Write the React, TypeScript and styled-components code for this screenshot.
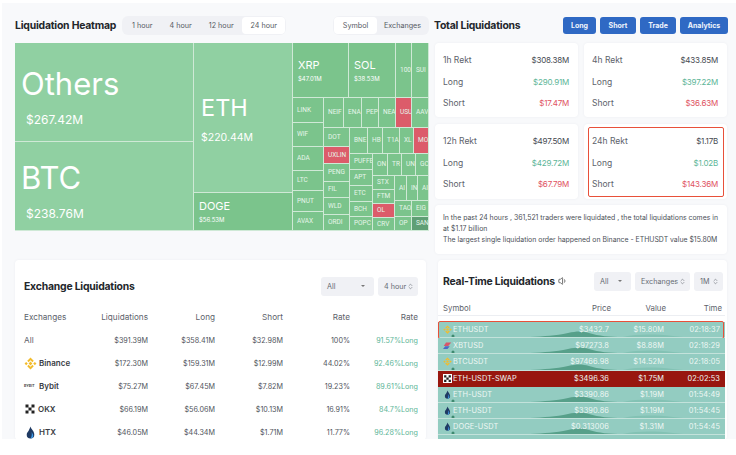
import React from 'react'
import styled, {createGlobalStyle} from 'styled-components'
import {ChevronsUpDown, Volume1} from 'lucide-react'

const GlobalStyle = createGlobalStyle`
  html, body {
    margin: 0;
    padding: 0;
    background: #fff;
    font-family: Inter, "Liberation Sans", sans-serif;
    color: #2a2d33;
  }
`

const Page = styled.div`
  width: 734px;
  height: 436px;
  margin: 3px 0 0 2px;
  padding: 0 7px 0 13px;
  box-sizing: border-box;
  overflow: hidden;
  background: #f8f9fb;
  display: grid;
  grid-template-columns: 414px 292px;
  column-gap: 6px;
`
const Column = styled.div`
  display: flex;
  flex-direction: column;
`
const HeaderRow = styled.div`
  height: 40px;
  display: flex;
  align-items: center;
  padding-top: 4px;
  box-sizing: border-box;
  justify-content: space-between;
`
const HeaderLeft = styled.div`
  display: flex;
  align-items: center;
  gap: 6px;
`
const Title = styled.h2`
  margin: 0;
  font-size: 10.4px;
  font-weight: 700;
  letter-spacing: -0.2px;
  color: #23262b;
  white-space: nowrap;
`
const SideTitle = styled(Title)`
  margin-left: -1px;
`
const Segmented = styled.div`
  display: flex;
  align-items: center;
  height: 19px;
  padding: 0 1px;
  background: #f0f1f5;
  border-radius: 6px;
`
const Segment = styled.span<{$active?: boolean; $w: number}>`
  width: ${p => p.$w}px;
  height: ${p => (p.$active ? 17 : 15)}px;
  display: flex;
  align-items: center;
  justify-content: center;
  font-size: 7.2px;
  color: #555a63;
  border-radius: 4px;
  background: ${p => (p.$active ? '#fff' : 'transparent')};
`
const Buttons = styled.div`
  display: flex;
  gap: 4px;
  margin-right: -1px;
`
const BlueButton = styled.button<{$w: number}>`
  width: ${p => p.$w}px;
  height: 17px;
  padding: 0;
  border: 0;
  border-radius: 3px;
  background: #2f69c4;
  color: #f1f5fc;
  font-family: inherit;
  font-size: 7px;
  font-weight: 700;
`

/* treemap: tile positions are the content */
const Treemap = styled.div`
  position: relative;
  height: 188px;
  background: #fff;
`
const Tile = styled.div<{$tone: string; $kind: string}>`
  position: absolute;
  box-sizing: border-box;
  border-right: 1px solid #cfe9d6;
  border-bottom: 1px solid #cfe9d6;
  overflow: hidden;
  white-space: nowrap;
  color: #fff;
  display: flex;
  flex-direction: column;
  justify-content: center;
  background: ${p => ({big: '#90d0a2', mid: '#7bc48c', red: '#dc5c6a', dark: '#5f9f75'}[p.$tone])};
  padding-left: ${p => ({xl: 6, lg: 7, md: 5, xs: 4}[p.$kind])}px;
  padding-top: ${p => (p.$kind === 'xl' ? 7 : p.$kind === 'lg' ? 1 : 0)}px;
`
const TileName = styled.span<{$kind: string}>`
  font-weight: 400;
  font-family: ${p => (p.$kind === 'xs' ? 'Roboto, sans-serif' : 'inherit')};
  color: ${p => (p.$kind === 'xs' ? '#e6f5ea' : '#fff')};
  font-size: ${p => ({xl: 31, lg: 23.5, md: 11, xs: 6.5}[p.$kind])}px;
  line-height: ${p => ({xl: 38, lg: 32, md: 15, xs: 9}[p.$kind])}px;
`
const TileValue = styled.span<{$kind: string}>`
  font-size: ${p => ({xl: 12, lg: 10.5, md: 6}[p.$kind])}px;
  line-height: ${p => (p.$kind === 'md' ? 8 : 15)}px;
  margin-top: ${p => ({xl: 9, lg: 6, md: 2}[p.$kind])}px;
  margin-left: ${p => (p.$kind === 'xl' ? 5 : 0)}px;
`

const StatGrid = styled.div`
  display: grid;
  grid-template-columns: 143px 143px;
  gap: 7px 6px;
`
const Card = styled.div`
  background: #fff;
  border-radius: 4px;
  box-shadow: 0 0 3px rgba(30, 40, 70, 0.05);
`
const StatCard = styled(Card)<{$h: number}>`
  position: relative;
  height: ${p => p.$h}px;
  padding: 7px 9px 0 8px;
  box-sizing: border-box;
`
const Highlight = styled.div`
  position: absolute;
  top: 3px;
  left: 4px;
  right: 3px;
  bottom: 2px;
  border: 1.5px solid #e8503a;
  border-radius: 2px;
`
const StatRow = styled.div`
  display: flex;
  justify-content: space-between;
  align-items: center;
  font-size: 8.5px;
  line-height: 21.5px;
  color: #5d626b;
`
const StatValue = styled.span<{$c?: string}>`
  font-size: 8px;
  letter-spacing: -0.2px;
  color: ${p => p.$c || '#444850'};
`
const Note = styled(Card)`
  margin-top: 6px;
  height: 49px;
  padding: 7px 8px;
  box-sizing: border-box;
  font-size: 6.9px;
  line-height: 11px;
  color: #4b4f57;
  white-space: nowrap;
`

const ExchangeCard = styled(Card)`
  margin-top: 29px;
  width: 411px;
  height: 180px;
  padding: 16px 8px 0 9px;
  box-sizing: border-box;
`
const CardHead = styled.div`
  display: flex;
  justify-content: space-between;
  align-items: center;
  height: 20px;
`
const Selects = styled.div`
  display: flex;
  gap: 4px;
`
const SelectBox = styled.div<{$w: number}>`
  width: ${p => p.$w}px;
  height: 19px;
  padding: 0 4px 0 6px;
  box-sizing: border-box;
  display: flex;
  justify-content: space-between;
  align-items: center;
  background: #f0f1f5;
  border-radius: 3px;
  font-size: 7.2px;
  color: #666b74;
  white-space: nowrap;
`
const Caret = styled.i`
  width: 0;
  height: 0;
  margin-right: 5px;
  border-left: 2px solid transparent;
  border-right: 2px solid transparent;
  border-top: 2px solid #777;
`
const ExRow = styled.div<{$head?: boolean}>`
  display: grid;
  grid-template-columns: 60px 64px 67px 68px 67px 68px;
  align-items: center;
  height: 23px;
  font-size: ${p => (p.$head ? 8.2 : 7.2)}px;
  color: ${p => (p.$head ? '#5d626b' : '#50545c')};
  margin-top: ${p => (p.$head ? 9.5 : 0)}px;
  white-space: nowrap;
  & > span {
    text-align: right;
  }
`
const ExName = styled.div`
  display: flex;
  align-items: center;
  gap: 2px;
  font-size: 8px;
  font-weight: 600;
  color: #3a3d44;
`
const ExPlain = styled.div`
  font-size: 8.2px;
  color: #5d626b;
`
const BybitMark = styled.span`
  width: 13px;
  font-size: 3.5px;
  font-weight: 700;
  color: #444;
`
const LongRate = styled.span`
  color: #5cb597;
`

const LiveCard = styled(Card)`
  margin-top: 6px;
  margin-left: 3px;
  height: 180px;
`
const LiveHead = styled(CardHead)`
  padding: 11px 4px 0 5px;
  height: 20px;
`
const TitleGroup = styled.div`
  display: flex;
  align-items: center;
  gap: 3px;
  color: #555;
`
const LiveRow = styled.div<{$sell?: boolean}>`
  position: relative;
  display: grid;
  grid-template-columns: 96px 70px 55px 56px;
  align-items: center;
  box-sizing: border-box;
  width: 287px;
  height: 16.2px;
  padding: 0 5px;
  font-size: 7.4px;
  letter-spacing: 0.1px;
  color: #eef7f4;
  background: ${p => (p.$sell ? '#98160f' : '#93ccc1')};
  border-bottom: 1px solid ${p => (p.$sell ? '#98160f' : '#c3e2db')};
  white-space: nowrap;
  & > span {
    text-align: right;
    position: relative;
  }
`
const LiveHeadRow = styled.div`
  display: grid;
  grid-template-columns: 98px 70px 55px 56px;
  align-items: center;
  box-sizing: border-box;
  width: 287px;
  height: 16px;
  margin-top: 9px;
  margin-bottom: 6px;
  padding: 0 3px 0 5px;
  font-size: 7.8px;
  color: #5d626b;
  border-bottom: 1px solid #eceef2;
  & > span {
    text-align: right;
  }
`
const Symbol = styled.div`
  position: relative;
  display: flex;
  align-items: center;
  gap: 1px;
  white-space: nowrap;
`
const Wave = styled.svg`
  position: absolute;
  left: 0;
  bottom: 0;
  width: 287px;
  height: 15px;
`
const RowMark = styled.div`
  position: absolute;
  left: 0;
  top: -1px;
  width: 286px;
  height: 18px;
  border: 1.5px solid #e8503a;
  border-radius: 2px;
  box-sizing: border-box;
`

const BinanceIcon = ({size = 9}: {size?: number}) => (
  <svg width={size} height={size} viewBox="0 0 24 24" fill="#f2bc2c">
    <path d="M12 1l6 6-2.500 2.500L12 6 8.500 9.500 6 7zM12 23l-6-6 2.500-2.500L12 18l3.500-3.500L18 17zM1 12l3-3 3 3-3 3zM23 12l-3 3-3-3 3-3zM12 8.500l3.500 3.500-3.500 3.500L8.500 12z"/>
  </svg>
)
const OkxIcon = ({size = 9, bg}: {size?: number; bg?: string}) => (
  <svg width={size} height={size} viewBox="0 0 24 24">
    <rect width="24" height="24" fill={bg || 'none'}/>
    <path fill="#222" d="M3 3h6v6H3zM15 3h6v6h-6zM9 9h6v6H9zM3 15h6v6H3zM15 15h6v6h-6z"/>
  </svg>
)
const HtxIcon = ({size = 12}: {size?: number}) => (
  <svg width={size} height={size} viewBox="0 0 24 24">
    <path fill="#1f3a63" d="M12 1c1 5 7 8 7 15a7 7 0 0 1-14 0c0-4 3-5 4-8 1-2 2-4 3-7z"/>
    <path fill="#3f9be8" d="M14 11c2 3 3 5 3 7a5 5 0 0 1-5 5c2-3 3-7 2-12z"/>
  </svg>
)
const BitmexIcon = () => (
  <svg width={9} height={9} viewBox="0 0 24 24">
    <path fill="#d8566a" d="M8 4h14L14 13H2z"/>
    <path fill="#4b6ac4" d="M6 14h12l-6 7H0z"/>
  </svg>
)

type TileData = {
    n: string
    x: number
    y: number
    w: number
    h: number
    tone?: string
    kind?: string
    v?: string
}

const xs = (n: string, x: number, y: number, x2: number, y2: number, tone = 'mid'): TileData =>
    ({n, x: x - 15, y: y - 43, w: x2 - x, h: y2 - y, tone, kind: 'xs'})

const tiles: TileData[] = [
    {n: 'Others', x: 0, y: 0, w: 179, h: 99, tone: 'big', kind: 'xl', v: '$267.42M'},
    {n: 'BTC', x: 0, y: 99, w: 179, h: 89, tone: 'big', kind: 'xl', v: '$238.76M'},
    {n: 'ETH', x: 179, y: 0, w: 99, h: 150, tone: 'big', kind: 'lg', v: '$220.44M'},
    {n: 'DOGE', x: 179, y: 150, w: 99, h: 38, tone: 'mid', kind: 'md', v: '$56.53M'},
    {n: 'XRP', x: 278, y: 0, w: 56, h: 55, tone: 'mid', kind: 'md', v: '$47.01M'},
    {n: 'SOL', x: 334, y: 0, w: 47, h: 55, tone: 'mid', kind: 'md', v: '$38.53M'},
    xs('100', 396, 43, 412, 98), xs('SUI', 412, 43, 429, 98),
    xs('LINK', 293, 98, 324, 123), xs('WIF', 293, 123, 324, 147), xs('ADA', 293, 147, 324, 171),
    xs('LTC', 293, 171, 324, 191), xs('PNUT', 293, 191, 324, 212), xs('AVAX', 293, 212, 324, 231),
    xs('NEIF', 324, 98, 344, 128), xs('ENA', 344, 98, 362, 128), xs('PEP', 362, 98, 379, 128),
    xs('NEA', 379, 98, 396, 128), xs('USU', 396, 98, 412, 128, 'red'), xs('AAV', 412, 98, 429, 128),
    xs('DOT', 324, 128, 350, 147), xs('UXLIN', 324, 147, 350, 164, 'red'), xs('PENG', 324, 164, 350, 182),
    xs('FIL', 324, 182, 350, 198), xs('WLD', 324, 198, 350, 215), xs('ORDI', 324, 215, 350, 231),
    xs('BNE', 350, 128, 368, 154), xs('HB', 368, 128, 383, 154), xs('T1A', 383, 128, 400, 154),
    xs('XL', 400, 128, 414, 154), xs('MO', 414, 128, 429, 154, 'red'),
    xs('PUFFE', 350, 154, 373, 170), xs('APT', 350, 170, 373, 186), xs('ETC', 350, 186, 373, 202),
    xs('BCH', 350, 202, 373, 217), xs('POPC', 350, 217, 373, 231),
    xs('ON', 373, 154, 388, 176), xs('TR', 388, 154, 402, 176), xs('UN', 402, 154, 416, 176),
    xs('GC', 416, 154, 429, 176),
    xs('STX', 373, 176, 395, 190), xs('FTM', 373, 190, 395, 204), xs('OL', 373, 204, 395, 218, 'red'),
    xs('CRV', 373, 218, 395, 231),
    xs('AI', 395, 176, 407, 201), xs('IN', 407, 176, 418, 201), xs('AI', 418, 176, 429, 201),
    xs('TAO', 395, 201, 412, 217), xs('EIG', 412, 201, 429, 217), xs('OP', 395, 217, 412, 231),
    xs('SAN', 412, 217, 429, 231, 'dark'),
]

const stats = [
    {name: '1h Rekt', total: '$308.38M', long: '$290.91M', short: '$17.47M', h: 74},
    {name: '4h Rekt', total: '$433.85M', long: '$397.22M', short: '$36.63M', h: 74},
    {name: '12h Rekt', total: '$497.50M', long: '$429.72M', short: '$67.79M', h: 75},
    {name: '24h Rekt', total: '$1.17B', long: '$1.02B', short: '$143.36M', h: 75, marked: true},
]

const exchanges = [
    {name: 'All', liq: '$391.39M', long: '$358.41M', short: '$32.98M', rate: '100%', lr: '91.57%Long'},
    {name: 'Binance', liq: '$172.30M', long: '$159.31M', short: '$12.99M', rate: '44.02%', lr: '92.46%Long', icon: <BinanceIcon size={13}/>},
    {name: 'Bybit', liq: '$75.27M', long: '$67.45M', short: '$7.82M', rate: '19.23%', lr: '89.61%Long', icon: <BybitMark>BYBIT</BybitMark>},
    {name: 'OKX', liq: '$66.19M', long: '$56.06M', short: '$10.13M', rate: '16.91%', lr: '84.7%Long', icon: <OkxIcon size={12}/>},
    {name: 'HTX', liq: '$46.05M', long: '$44.34M', short: '$1.71M', rate: '11.77%', lr: '96.28%Long', icon: <HtxIcon size={13}/>},
]

const live = [
    {s: 'ETHUSDT', p: '$3432.7', v: '$15.80M', t: '02:18:37', i: <BinanceIcon/>},
    {s: 'XBTUSD', p: '$97273.8', v: '$8.88M', t: '02:18:29', i: <BitmexIcon/>},
    {s: 'BTCUSDT', p: '$97466.98', v: '$14.52M', t: '02:18:05', i: <BinanceIcon/>},
    {s: 'ETH-USDT-SWAP', p: '$3496.36', v: '$1.75M', t: '02:02:53', i: <OkxIcon bg="#fff"/>, sell: true},
    {s: 'ETH-USDT', p: '$3390.86', v: '$1.19M', t: '01:54:49', i: <HtxIcon size={9}/>},
    {s: 'ETH-USDT', p: '$3390.86', v: '$1.19M', t: '01:54:45', i: <HtxIcon size={9}/>},
    {s: 'DOGE-USDT', p: '$0.313006', v: '$1.31M', t: '01:54:45', i: <HtxIcon size={9}/>},
]

const App = () => {
    return (
        <Page>
            <GlobalStyle/>
            <Column>
                <HeaderRow>
                    <HeaderLeft>
                        <Title>Liquidation Heatmap</Title>
                        <Segmented>
                            <Segment $w={38}>1 hour</Segment>
                            <Segment $w={39}>4 hour</Segment>
                            <Segment $w={42}>12 hour</Segment>
                            <Segment $w={43} $active>24 hour</Segment>
                        </Segmented>
                    </HeaderLeft>
                    <Segmented>
                        <Segment $w={43} $active>Symbol</Segment>
                        <Segment $w={51}>Exchanges</Segment>
                    </Segmented>
                </HeaderRow>
                <Treemap>
                    {tiles.map((t, i) => (
                        <Tile
                            key={i}
                            $tone={t.tone || 'mid'}
                            $kind={t.kind || 'xs'}
                            style={{left: t.x, top: t.y, width: t.w, height: t.h}}
                        >
                            <TileName $kind={t.kind || 'xs'}>{t.n}</TileName>
                            {t.v && <TileValue $kind={t.kind || 'xs'}>{t.v}</TileValue>}
                        </Tile>
                    ))}
                </Treemap>
                <ExchangeCard>
                    <CardHead>
                        <Title>Exchange Liquidations</Title>
                        <Selects>
                            <SelectBox $w={53}>All<Caret/></SelectBox>
                            <SelectBox $w={40}>4 hour<ChevronsUpDown size={7}/></SelectBox>
                        </Selects>
                    </CardHead>
                    <ExRow $head>
                        <ExPlain>Exchanges</ExPlain>
                        <span>Liquidations</span>
                        <span>Long</span>
                        <span>Short</span>
                        <span>Rate</span>
                        <span>Rate</span>
                    </ExRow>
                    {exchanges.map(e => (
                        <ExRow key={e.name}>
                            {e.icon ? <ExName>{e.icon}{e.name}</ExName> : <ExPlain>{e.name}</ExPlain>}
                            <span>{e.liq}</span>
                            <span>{e.long}</span>
                            <span>{e.short}</span>
                            <span>{e.rate}</span>
                            <LongRate>{e.lr}</LongRate>
                        </ExRow>
                    ))}
                </ExchangeCard>
            </Column>
            <Column>
                <HeaderRow>
                    <SideTitle>Total Liquidations</SideTitle>
                    <Buttons>
                        <BlueButton $w={33}>Long</BlueButton>
                        <BlueButton $w={36}>Short</BlueButton>
                        <BlueButton $w={36}>Trade</BlueButton>
                        <BlueButton $w={48}>Analytics</BlueButton>
                    </Buttons>
                </HeaderRow>
                <StatGrid>
                    {stats.map(s => (
                        <StatCard key={s.name} $h={s.h}>
                            {s.marked && <Highlight/>}
                            <StatRow>{s.name}<StatValue>{s.total}</StatValue></StatRow>
                            <StatRow>Long<StatValue $c="#5cb597">{s.long}</StatValue></StatRow>
                            <StatRow>Short<StatValue $c="#e0525f">{s.short}</StatValue></StatRow>
                        </StatCard>
                    ))}
                </StatGrid>
                <Note>
                    In the past 24 hours , 361,521 traders were liquidated , the total liquidations comes in<br/>
                    at $1.17 billion<br/>
                    The largest single liquidation order happened on Binance - ETHUSDT value $15.80M
                </Note>
                <LiveCard>
                    <LiveHead>
                        <TitleGroup>
                            <Title>Real-Time Liquidations</Title>
                            <Volume1 size={10}/>
                        </TitleGroup>
                        <Selects>
                            <SelectBox $w={37}>All<Caret/></SelectBox>
                            <SelectBox $w={55}>Exchanges<ChevronsUpDown size={7}/></SelectBox>
                            <SelectBox $w={29}>1M<ChevronsUpDown size={7}/></SelectBox>
                        </Selects>
                    </LiveHead>
                    <LiveHeadRow>
                        <Symbol>Symbol</Symbol>
                        <span>Price</span>
                        <span>Value</span>
                        <span>Time</span>
                    </LiveHeadRow>
                    {live.map((r, i) => (
                        <LiveRow key={i} $sell={r.sell}>
                            {!r.sell && (
                                <Wave viewBox="0 0 287 15" preserveAspectRatio="none">
                                    <circle cx="15" cy="14" r="1.500" fill="#3f8a70"/>
                                    <path fill="#57a08a" d="M92 15c15-1 25-1 38-4 9-2 14-2 21 0 10 3 20 4 34 4z"/>
                                    <path fill="#83c2b4" d="M185 15c15-3 30-3 50-1l10 1z"/>
                                </Wave>
                            )}
                            <Symbol>{r.i}{r.s}</Symbol>
                            <span>{r.p}</span>
                            <span>{r.v}</span>
                            <span>{r.t}</span>
                            {i === 0 && <RowMark/>}
                        </LiveRow>
                    ))}
                    <LiveRow/>
                </LiveCard>
            </Column>
        </Page>
    )
}

export default App
